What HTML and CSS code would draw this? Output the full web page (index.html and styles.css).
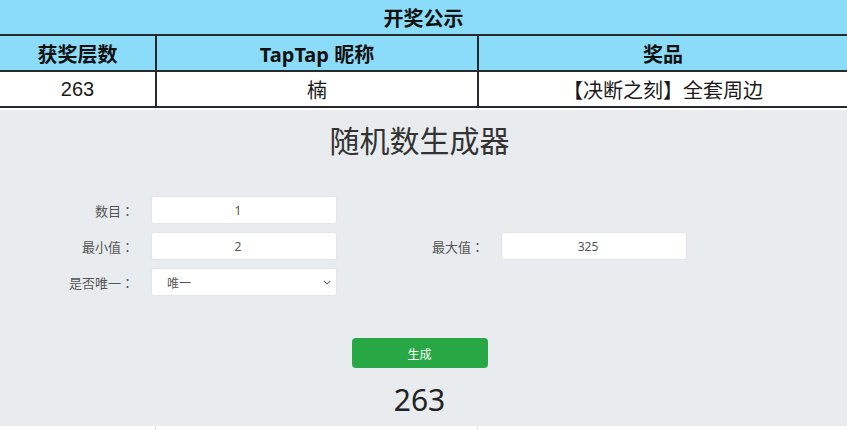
FILE: index.html
```html
<!DOCTYPE html>
<html lang="zh-CN">
<head>
<meta charset="utf-8">
<title>开奖公示</title>
<link rel="stylesheet" href="styles.css">
</head>
<body>
<div class="award">
  <div class="row title-row"><div class="cell full">开奖公示</div></div>
  <div class="row head-row">
    <div class="cell">获奖层数</div>
    <div class="cell sep">TapTap 昵称</div>
    <div class="cell sep">奖品</div>
  </div>
  <div class="row data-row">
    <div class="cell num">263</div>
    <div class="cell sep">楠</div>
    <div class="cell sep">【决断之刻】全套周边</div>
  </div>
  <div class="row faint-row">
    <div class="cell"></div><div class="cell fsep"></div><div class="cell fsep"></div>
  </div>
</div>

<section class="panel">
  <h1 class="panel-title">随机数生成器</h1>
  <form class="form">
    <label class="lbl">数目<span class="colon">：</span></label>
    <input class="field" type="text" value="1">
    <span class="empty"></span><span class="empty"></span>

    <label class="lbl">最小值<span class="colon">：</span></label>
    <input class="field" type="text" value="2">
    <label class="lbl">最大值<span class="colon">：</span></label>
    <input class="field" type="text" value="325">

    <label class="lbl">是否唯一<span class="colon">：</span></label>
    <div class="select-wrap">
      <select class="field select">
        <option>唯一</option>
        <option>不唯一</option>
      </select>
      <svg class="chev" width="8" height="5" viewBox="0 0 8 5"><path d="M0.8 0.8 L4 4 L7.2 0.8" fill="none" stroke="#777" stroke-width="1.2"/></svg>
    </div>
  </form>
  <div class="actions"><button class="btn" type="button">生成</button></div>
  <div class="result">263</div>
</section>

<div class="row faint-row tail">
  <div class="cell"></div><div class="cell fsep"></div><div class="cell fsep"></div>
</div>
</body>
</html>
```

FILE: styles.css
```css
* { box-sizing: border-box; }
html, body { margin: 0; padding: 0; }
body {
  background: #fff;
  font-family: "Noto Sans", "Noto Sans CJK SC", sans-serif;
  color: #222;
  width: 847px;
  overflow: hidden;
}

.award { font-family: "Liberation Sans", "Noto Sans CJK SC", sans-serif; }

.row {
  display: grid;
  grid-template-columns: 155px 322px 1fr;
}
.cell {
  height: 36px;
  border-bottom: 2px solid #262a2d;
  display: flex;
  align-items: center;
  justify-content: center;
  font-size: 20px;
  color: #111;
}
.cell.sep { border-left: 2px solid #262a2d; }
.cell.full { grid-column: 1 / -1; }

.title-row, .head-row { background: #8bdcf8; }
.title-row .cell, .head-row .cell {
  font-family: "Noto Sans", "Noto Sans CJK SC", sans-serif;
  font-weight: 700;
  color: #111;
}
.data-row .cell { color: #1a1a1a; }

.faint-row .cell {
  height: 2px;
  border-bottom: none;
}
.faint-row .cell.fsep { border-left: 1px solid #dfe2e5; }
.faint-row.tail .cell { height: 4px; }

.panel {
  background: #e9ecef;
  height: 316px;
  padding: 9px 8px 0 0;
}
.panel-title {
  margin: 0;
  text-align: center;
  font-family: "Noto Sans CJK SC", sans-serif;
  font-size: 30px;
  line-height: 40px;
  font-weight: 400;
  color: #333;
}

.form {
  margin-top: 37px;
  display: grid;
  grid-template-columns: 140px 186px 142px 186px;
  column-gap: 11px;
  row-gap: 8px;
  grid-auto-rows: 28px;
}
.lbl {
  font-family: "Noto Sans CJK SC", sans-serif;
  font-size: 13px;
  color: #555;
  text-align: right;
  padding-right: 6px;
  display: flex;
  align-items: center;
  justify-content: flex-end;
}
.colon { font-family: "Noto Sans CJK TC", sans-serif; }
.field {
  width: 186px;
  height: 28px;
  border: 1px solid #e1e4e8;
  border-radius: 3px;
  background: #fff;
  font-family: "Noto Sans", "Noto Sans CJK SC", sans-serif;
  font-size: 12px;
  color: #555;
  text-align: center;
  padding: 0 12px 0 0;
  outline: none;
}
.select-wrap { position: relative; width: 186px; height: 28px; }
.select {
  -webkit-appearance: none;
  appearance: none;
  text-align: left;
  padding: 0 0 0 15px;
  font-family: "Noto Sans CJK SC", sans-serif;
}
.chev {
  position: absolute;
  right: 6px;
  top: 12px;
  pointer-events: none;
}

.actions {
  margin-top: 42px;
  display: flex;
  justify-content: center;
}
.btn {
  width: 136px;
  height: 30px;
  border: none;
  border-radius: 4px;
  background: #28a745;
  color: #fff;
  font-family: "Noto Sans CJK SC", sans-serif;
  font-size: 12px;
  padding: 0;
}
.result {
  margin-top: 12px;
  text-align: center;
  font-family: "Noto Sans", sans-serif;
  font-size: 30px;
  line-height: 40px;
  color: #222;
}
```
